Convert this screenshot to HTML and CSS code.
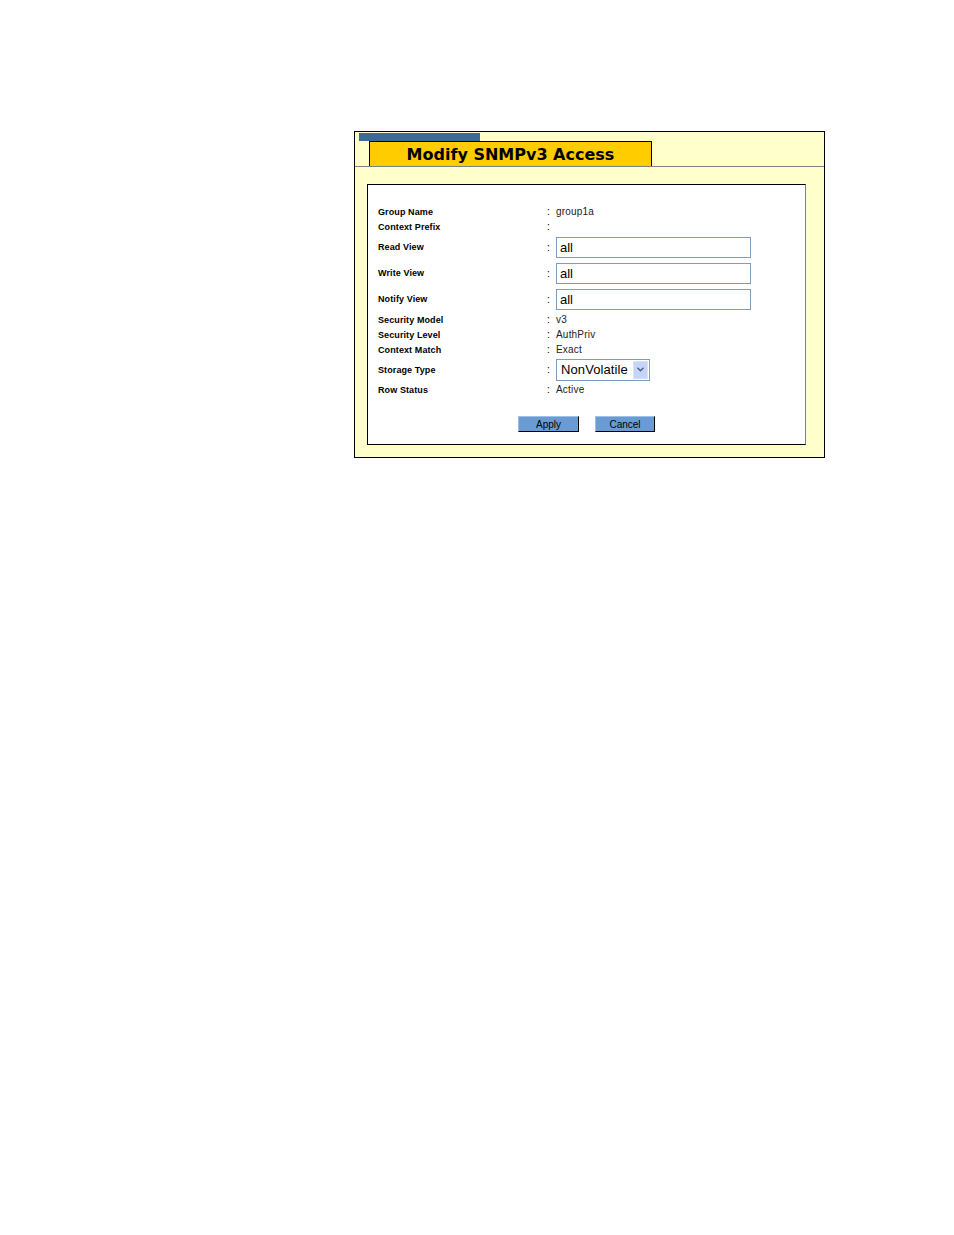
FILE: index.html
```html
<!DOCTYPE html>
<html>
<head>
<meta charset="utf-8">
<title>Modify SNMPv3 Access</title>
<link rel="stylesheet" href="styles.css">
</head>
<body>
<div class="panel">
  <div class="header">
    <div class="tabbar"></div>
    <div class="title">Modify SNMPv3 Access</div>
  </div>
  <div class="box">
    <div class="form">
      <div class="row"><span class="label">Group Name</span><span class="colon">:</span><span class="value">group1a</span></div>
      <div class="row"><span class="label">Context Prefix</span><span class="colon">:</span><span class="value"></span></div>
      <div class="row tall"><span class="label">Read View</span><span class="colon">:</span><span class="value"><input class="text" type="text" value="all"></span></div>
      <div class="row tall"><span class="label">Write View</span><span class="colon">:</span><span class="value"><input class="text" type="text" value="all"></span></div>
      <div class="row tall"><span class="label">Notify View</span><span class="colon">:</span><span class="value"><input class="text" type="text" value="all"></span></div>
      <div class="row"><span class="label">Security Model</span><span class="colon">:</span><span class="value">v3</span></div>
      <div class="row"><span class="label">Security Level</span><span class="colon">:</span><span class="value">AuthPriv</span></div>
      <div class="row"><span class="label">Context Match</span><span class="colon">:</span><span class="value">Exact</span></div>
      <div class="row sel"><span class="label">Storage Type</span><span class="colon">:</span><span class="value">
        <span class="select"><span class="seltext">NonVolatile</span><span class="arrow"><svg width="7" height="5" viewBox="0 0 7 5"><path d="M0.5 0.8 L3.5 3.8 L6.5 0.8" fill="none" stroke="#4d6185" stroke-width="1.4"/></svg></span></span>
      </span></div>
      <div class="row"><span class="label">Row Status</span><span class="colon">:</span><span class="value">Active</span></div>
    </div>
    <div class="buttons">
      <button class="btn apply">Apply</button>
      <button class="btn cancel">Cancel</button>
    </div>
  </div>
</div>
</body>
</html>
```
FILE: styles.css
```css
html, body {
  margin: 0;
  padding: 0;
  background: #ffffff;
}
body {
  font-family: "Liberation Sans", Arial, sans-serif;
  color: #000;
}
.panel {
  margin: 131px 0 0 354px;
  width: 469px;
  height: 325px;
  border: 1px solid #000;
  background: #ffffcc;
  display: flex;
  flex-direction: column;
}
.header {
  padding-top: 1px;
  border-bottom: 1px solid #808080;
  display: flex;
  flex-direction: column;
}
.tabbar {
  margin-left: 4px;
  width: 121px;
  height: 8px;
  background: #3b6a98;
}
.title {
  margin-left: 14px;
  width: 281px;
  height: 24px;
  border: 1px solid #000;
  border-bottom: none;
  background: #ffcc00;
  font-family: "DejaVu Sans", Verdana, sans-serif;
  font-weight: bold;
  font-size: 16px;
  line-height: 26px;
  text-align: center;
}
.box {
  margin: 17px 0 0 12px;
  width: 437px;
  height: 259px;
  background: #fff;
  border: 1px solid #000;
  border-right-color: #808080;
  box-sizing: content-box;
  display: flex;
  flex-direction: column;
}
.form {
  padding: 19px 0 0 10px;
  display: flex;
  flex-direction: column;
}
.row {
  display: flex;
  align-items: center;
  height: 15px;
}
.row.tall { height: 26px; }
.row.sel { height: 25px; }
.label {
  width: 169px;
  font-size: 9px;
  font-weight: bold;
  letter-spacing: 0.1px;
}
.colon {
  width: 9px;
  font-size: 10px;
}
.value {
  font-size: 10px;
  letter-spacing: 0.2px;
  color: #222;
  display: flex;
  align-items: center;
}
.text {
  box-sizing: border-box;
  width: 195px;
  height: 21px;
  margin: 0;
  padding: 1px 3px 0;
  border: 1px solid #7f9db9;
  font-family: "Liberation Sans", Arial, sans-serif;
  font-size: 13px;
  color: #000;
  background: #fff;
  outline: none;
}
.select {
  box-sizing: border-box;
  width: 94px;
  height: 22px;
  border: 1px solid #7f9db9;
  display: flex;
  align-items: center;
  padding: 1px;
  background: #fff;
}
.seltext {
  flex: 1;
  padding-left: 3px;
  font-size: 13px;
  letter-spacing: 0.1px;
  color: #000;
}
.arrow {
  width: 15px;
  height: 18px;
  background: #c4d5f8;
  border: 1px solid #d8e3fb;
  box-sizing: border-box;
  display: flex;
  align-items: center;
  justify-content: center;
}
.buttons {
  margin-top: 19px;
  display: flex;
  justify-content: center;
  gap: 16px;
}
.btn {
  box-sizing: border-box;
  height: 16px;
  margin: 0;
  padding: 0;
  background: #6a9bd3;
  border: 1px solid #000;
  border-top-color: #9ec0ea;
  border-left-color: #9ec0ea;
  font-family: "Liberation Sans", Arial, sans-serif;
  font-size: 10px;
  line-height: 13px;
  color: #000;
}
.apply { width: 61px; }
.cancel { width: 60px; }
```
